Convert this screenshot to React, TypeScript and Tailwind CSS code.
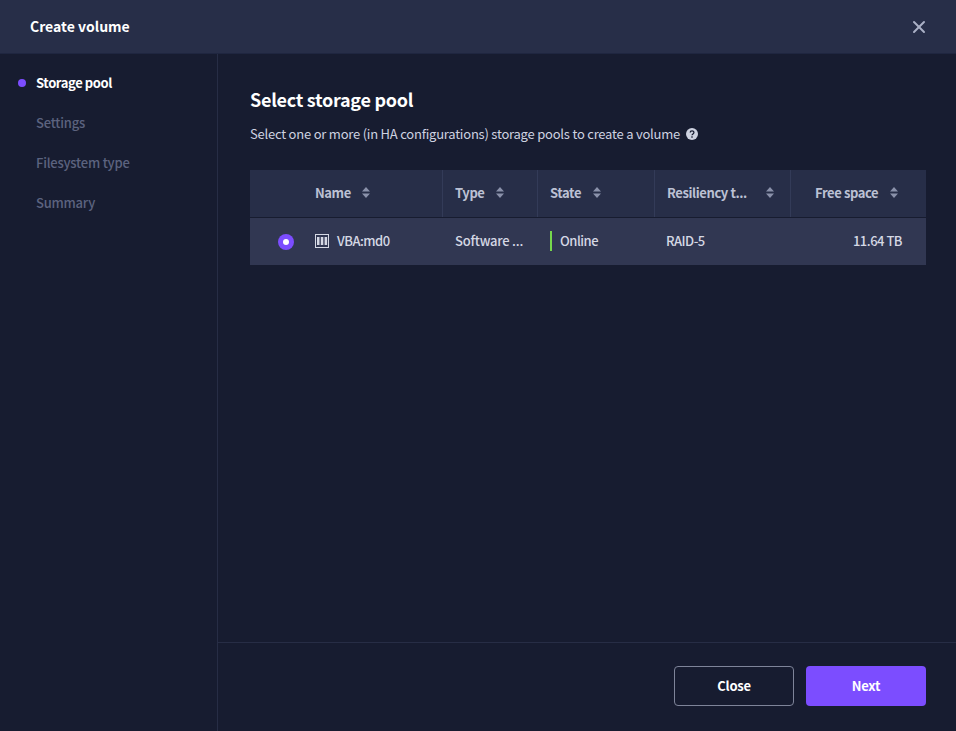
import { X } from 'lucide-react';

const STEPS = ['Storage pool', 'Settings', 'Filesystem type', 'Summary'];
const COLS = 'grid grid-cols-[53px_140px_95px_117px_136px_135px]';

function SortIcon() {
  return (
    <svg width="8" height="11" viewBox="0 0 8 11" className="shrink-0">
      <path d="M4 0 L8 4.500 H0 Z M0 6.500 H8 L4 11 Z" fill="#8a91aa" />
    </svg>
  );
}

function HeadCell({ label, gap = 'gap-[12px]', className = '' }: { label: string; gap?: string; className?: string }) {
  return (
    <div className={`flex items-center pb-[2px] ${gap} border-r border-[#333b58] last:border-r-0 ${className}`}>
      <span>{label}</span>
      <SortIcon />
    </div>
  );
}

function PoolIcon() {
  return (
    <svg width="14" height="14" viewBox="0 0 14 14" className="shrink-0">
      <rect x="0.5" y="0.5" width="13" height="13" fill="none" stroke="#d5d8e4" />
      <path d="M2 3h2.500v8H2zM5.800 3h2.500v8H5.800zM9.600 3h2.500v8H9.600z" fill="#d5d8e4" />
    </svg>
  );
}

export default function App() {
  return (
    <div
      className="w-[956px] h-[731px] flex flex-col bg-[#171c30] text-[13px] tracking-[-0.22px] overflow-hidden"
      style={{ fontFamily: '"Noto Sans CJK SC", "Noto Sans", sans-serif' }}
    >
      {/* Header */}
      <div className="h-[54px] shrink-0 flex items-center justify-between pl-[30px] pr-[27px] bg-[#272e48] border-b border-[#1f2640]">
        <span className="text-[14px] tracking-normal font-bold text-white">Create volume</span>
        <X size={20} strokeWidth={2.4} color="#aab0c6" />
      </div>

      <div className="flex flex-1 min-h-0">
        {/* Steps */}
        <div className="w-[218px] shrink-0 border-r border-[#272d45] pt-[8px]">
          {STEPS.map((step, i) => (
            <div key={step} className="h-[40px] flex items-center pl-[18px]">
              <span className={`mt-[2px] w-[8px] h-[8px] rounded-full mr-[10px] ${i === 0 ? 'bg-[#7c4dff]' : ''}`} />
              <span className={i === 0 ? 'mt-[2px] font-bold text-white tracking-[-0.4px]' : 'mt-[2px] font-medium text-[#5c637f]'}>{step}</span>
            </div>
          ))}
        </div>

        {/* Content */}
        <div className="flex-1 flex flex-col min-w-0">
          <div className="flex-1 pl-[32px] pr-[30px] pt-[32px]">
            <h2 className="text-[18px] leading-[26px] tracking-[-0.28px] font-bold text-white">Select storage pool</h2>
            <div className="mt-[12px] h-[20px] flex items-center gap-[6px] text-[#ced2e0]">
              <span>Select one or more (in HA configurations) storage pools to create a volume</span>
              <svg width="12" height="12" viewBox="0 0 12 12">
                <circle cx="6" cy="6" r="6" fill="#ced2e0" />
                <path d="M4.200 4.600c0-2.300 3.700-2.300 3.700-.1 0 1.400-1.900 1.400-1.900 2.800" fill="none" stroke="#171c30" strokeWidth="1.300" />
                <rect x="5.300" y="8.300" width="1.400" height="1.400" fill="#171c30" />
              </svg>
            </div>

            {/* Table */}
            <div className="mt-[26px] text-[#bcc1d4] font-bold tracking-[-0.4px]">
              <div className={`${COLS} h-[48px] bg-[#272e48] border-b border-[#171c30]`}>
                <div />
                <HeadCell label="Name" gap="gap-[11px]" className="pl-[12px]" />
                <HeadCell label="Type" gap="gap-[11px]" className="pl-[12px]" />
                <HeadCell label="State" className="pl-[12px]" />
                <HeadCell label="Resiliency t..." gap="gap-[19px]" className="pl-[12px]" />
                <HeadCell label="Free space" className="pl-[24px]" />
              </div>
              <div className={`${COLS} h-[47px] pb-[2px] items-center bg-[#313752] font-medium text-[#d5d8e4] tracking-[-0.5px]`}>
                <div className="flex justify-end pr-[9px] mt-[2px]">
                  <span className="w-[16px] h-[16px] rounded-full bg-[#7c4dff] flex items-center justify-center">
                    <span className="w-[6px] h-[6px] rounded-full bg-white" />
                  </span>
                </div>
                <div className="pl-[12px] flex items-center gap-[8px]">
                  <PoolIcon />
                  <span>VBA:md0</span>
                </div>
                <div className="pl-[12px] tracking-[-0.22px]">Software ...</div>
                <div className="pl-[12px] flex items-center gap-[8px]">
                  <span className="w-[2px] h-[20px] bg-[#76d84c]" />
                  <span>Online</span>
                </div>
                <div className="pl-[11px]">RAID-5</div>
                <div className="pr-[24px] text-right">11.64 TB</div>
              </div>
            </div>
          </div>

          {/* Footer */}
          <div className="h-[89px] shrink-0 border-t border-[#272d45] flex justify-end items-start gap-[12px] pt-[23px] pr-[30px] font-bold text-white">
            <button className="w-[120px] h-[40px] rounded-[4px] border border-[#7e8499]">Close</button>
            <button className="w-[120px] h-[40px] rounded-[4px] bg-[#7c4dff]">Next</button>
          </div>
        </div>
      </div>
    </div>
  );
}
